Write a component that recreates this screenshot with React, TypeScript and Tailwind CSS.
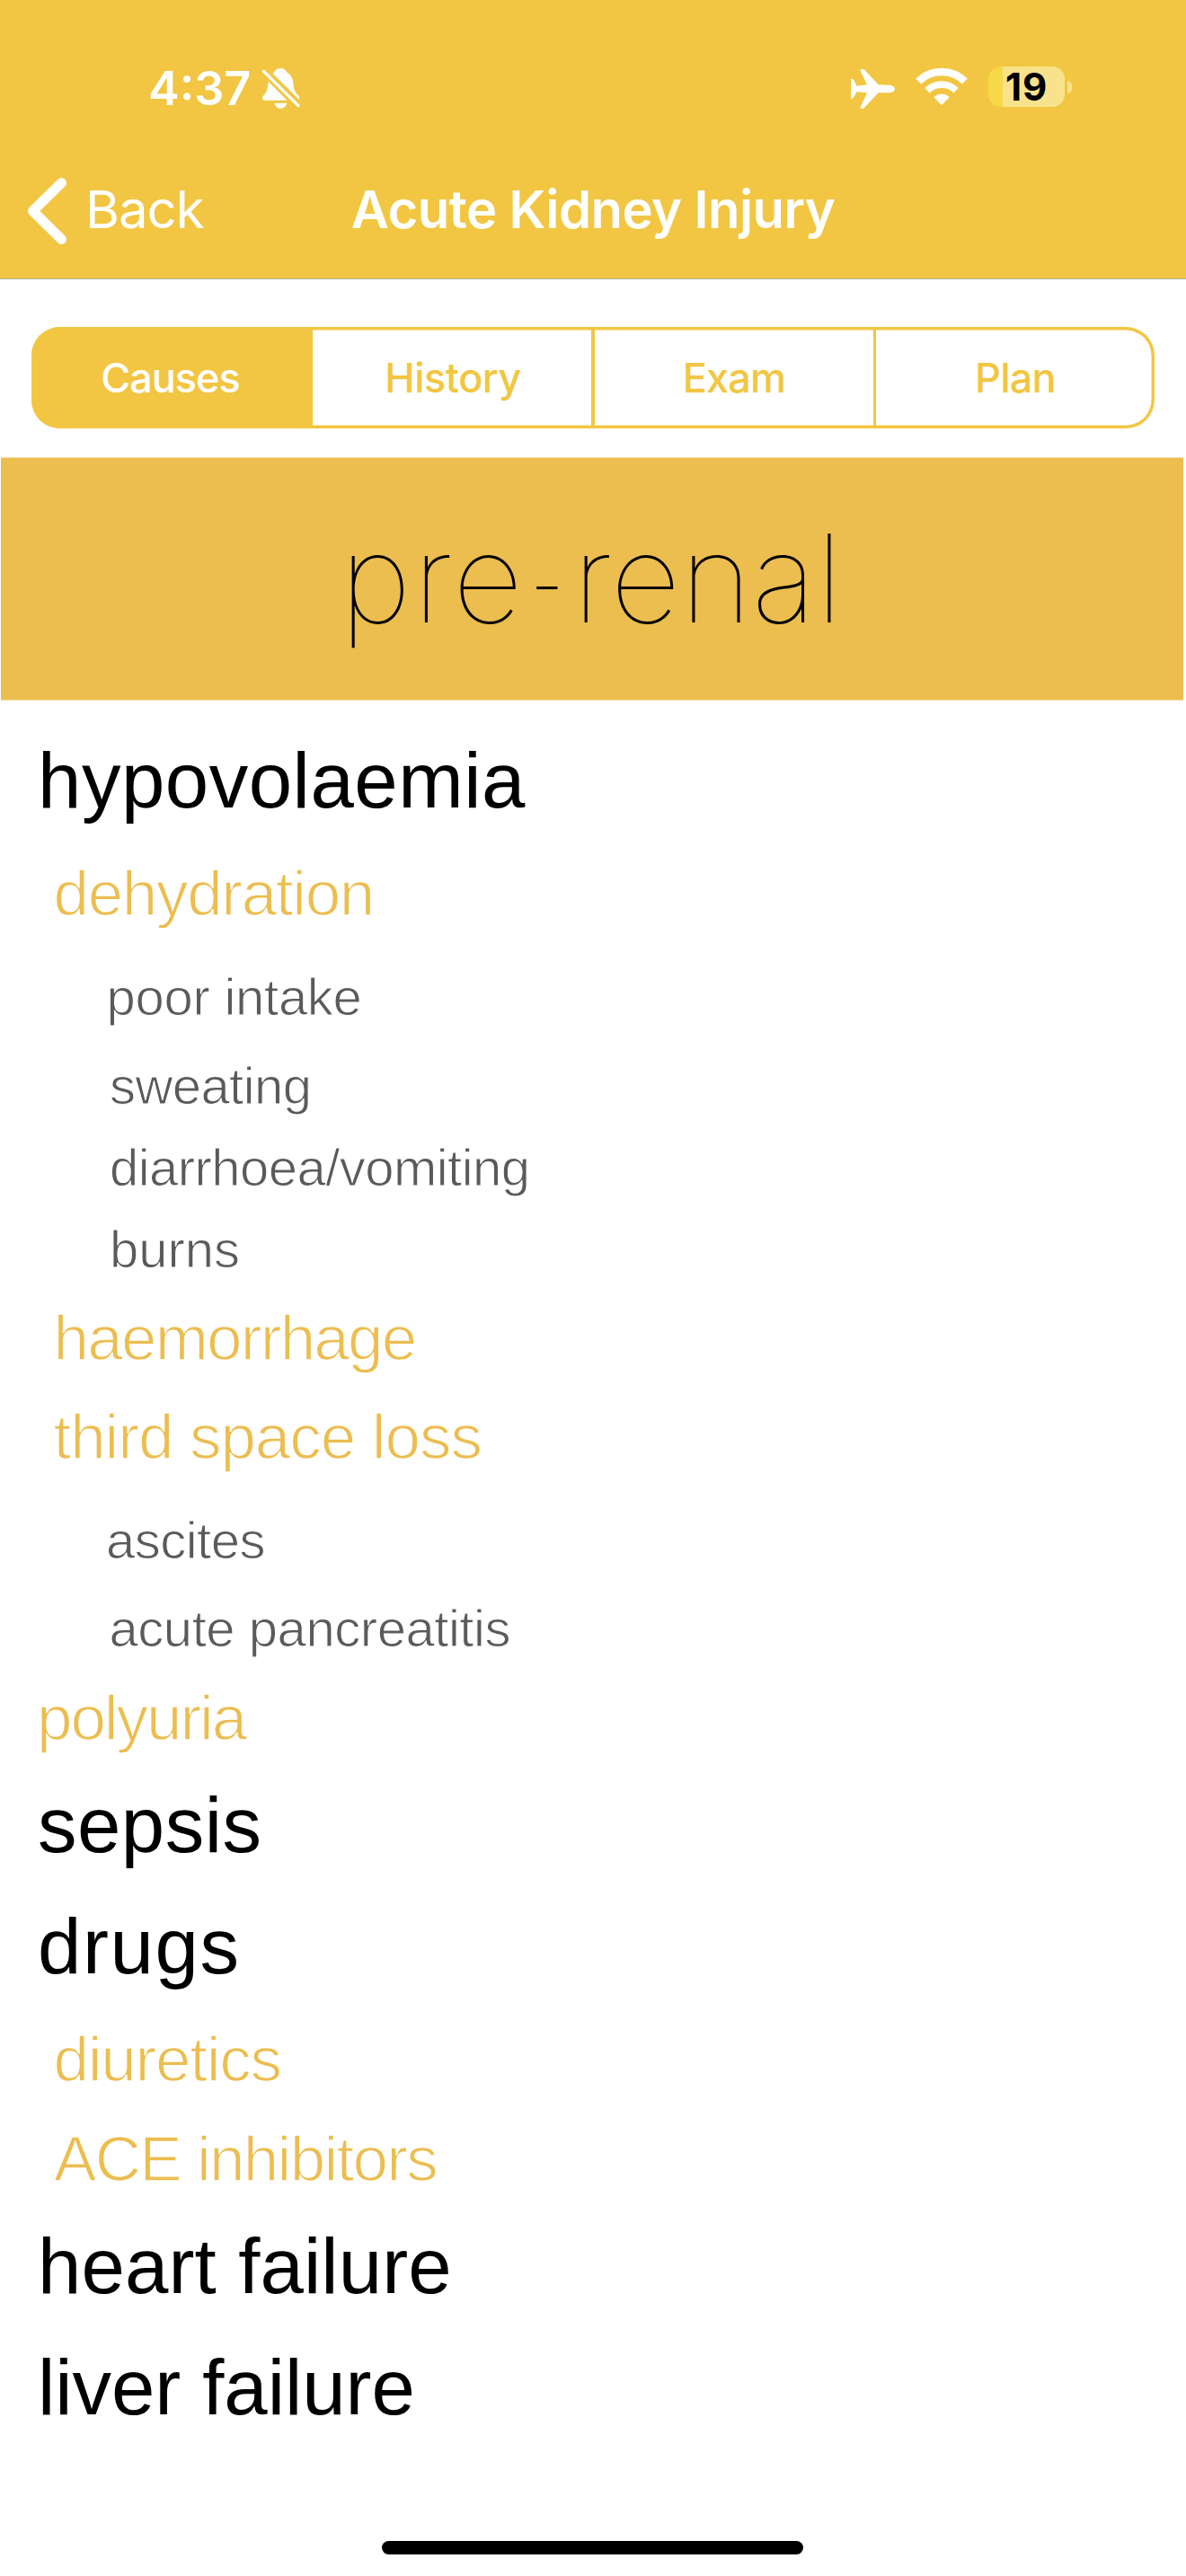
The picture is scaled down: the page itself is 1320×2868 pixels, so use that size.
type Row = { text: string; look: string };

const heading = "text-[87px] leading-[105px] text-black";
const item =
  "text-[71px] leading-[81px] text-[#ecbd4f] [-webkit-text-stroke:1.5px_white]";
const detail =
  "text-[58px] leading-[65px] text-[#5a5a5a] [-webkit-text-stroke:1px_white]";

const rows: Row[] = [
  { text: "hypovolaemia", look: `${heading} pl-[42px] tracking-[0.51px]` },
  { text: "dehydration", look: `${item} mt-[33px] pl-[59.5px] tracking-[-1.32px]` },
  { text: "poor intake", look: `${detail} mt-[42px] pl-[118.5px] tracking-[-0.26px]` },
  { text: "sweating", look: `${detail} mt-[34px] pl-[122px] tracking-[-0.57px]` },
  { text: "diarrhoea/vomiting", look: `${detail} mt-[26px] pl-[122px] tracking-[-0.54px]` },
  { text: "burns", look: `${detail} mt-[26px] pl-[122px]` },
  { text: "haemorrhage", look: `${item} mt-[26px] pl-[59.5px] tracking-[-1.75px]` },
  { text: "third space loss", look: `${item} mt-[29px] pl-[59.5px] tracking-[-1.06px]` },
  { text: "ascites", look: `${detail} mt-[42px] pl-[118px] tracking-[-0.52px]` },
  { text: "acute pancreatitis", look: `${detail} mt-[33px] pl-[121.5px] tracking-[-0.45px]` },
  { text: "polyuria", look: `${item} mt-[27px] pl-[41px] tracking-[-2.05px]` },
  { text: "sepsis", look: `${heading} mt-[26px] pl-[42px] tracking-[0.48px]` },
  { text: "drugs", look: `${heading} mt-[30px] pl-[42px] tracking-[1.57px]` },
  { text: "diuretics", look: `${item} mt-[33px] pl-[59.5px] tracking-[-1.22px]` },
  { text: "ACE inhibitors", look: `${item} mt-[30px] pl-[60px] tracking-[-1.7px]` },
  { text: "heart failure", look: `${heading} mt-[26px] pl-[42px] tracking-[0.11px]` },
  { text: "liver failure", look: `${heading} mt-[30px] pl-[42px] tracking-[-0.07px]` },
];

function BellOff() {
  return (
    <svg viewBox="873 74 132 141" className="h-[47px] w-[44px]" fill="white">
      <path d="M911 95C917 89 921 77 937 77C949 77 955 84 959 92C973 100 979 114 980 133C981 153 989 159 997 169C1000 173 1000 177 998 181Z" />
      <path d="M896 121L959 184H884C875 184 874 174 878 170C888 159 893 152 894 137Z" />
      <path d="M916 193H958C955 205 947 211 937 211S919 205 916 193Z" />
      <path d="M880.5 87L996 202" stroke="white" strokeWidth="10" strokeLinecap="round" />
    </svg>
  );
}

function Plane() {
  return (
    <svg viewBox="141 79 147 132" className="h-[44px] w-[49px]" fill="white">
      <path d="M288 145C288 152 280 158 265 158L233 158L188 206Q186 210 182 210L174 210Q171 209 173 205L195 158L161 155L151 172Q148 177 144 177L141 177V112L145 111Q149 112 151 116L161 135L195 131L173 85Q171 80 175 79L182 79Q186 79 188 83L233 131L265 132C280 132 288 138 288 145Z" />
    </svg>
  );
}

function Wifi() {
  return (
    <svg viewBox="359 75 174 129" className="h-[43px] w-[58px]" fill="none" stroke="white">
      <path d="M368.500 121.500A111 111 0 0 1 523.500 121.500" strokeWidth="25" />
      <path d="M398 152A69 69 0 0 1 494 152" strokeWidth="23" />
      <path
        d="M446 199.500L421.500 174.500A37 37 0 0 1 470.500 174.500Z"
        fill="white"
        strokeWidth="3"
        strokeLinejoin="round"
      />
    </svg>
  );
}

function Battery() {
  return (
    <div className="flex items-center gap-[3px]">
      <div className="flex h-[45px] w-[85px] items-center justify-center rounded-[14px] bg-[linear-gradient(to_right,#f7d848_16px,#f8e28c_16px)] text-[42px] leading-[45px] font-bold tracking-[0.9px] text-black">
        <span className="-mt-px">19</span>
      </div>
      <div className="h-[14px] w-[5px] rounded-r-full bg-[#f8e28c]" />
    </div>
  );
}

export default function App() {
  return (
    <div className="flex h-[2868px] w-[1320px] flex-col overflow-hidden bg-white font-['Inter',sans-serif]">
      <header className="h-[311px] border-b border-[#b5b0a0] bg-[#f2c642] text-white">
        <div className="flex h-[196px] pt-[68px] pr-[127px] pl-[165px]">
          <div className="flex h-[61px] items-center">
            <span className="text-[52px] leading-[61px] font-semibold">4:37</span>
            <span className="ml-[12px]">
              <BellOff />
            </span>
          </div>
          <div className="ml-auto flex h-[57px] items-center">
            <span className="mt-[4px]">
              <Plane />
            </span>
            <span className="ml-[23px]">
              <Wifi />
            </span>
            <span className="ml-[23px]">
              <Battery />
            </span>
          </div>
        </div>
        <div className="grid h-[76px] grid-cols-[1fr_auto_1fr] items-center">
          <div className="flex items-center pl-[30px]">
            <svg viewBox="30 196 46 77" className="h-[77px] w-[46px]" fill="none">
              <path
                d="M68.500 202.500L36.500 234L68.500 265.500"
                stroke="white"
                strokeWidth="11"
                strokeLinecap="round"
                strokeLinejoin="round"
              />
            </svg>
            <span className="mb-[5px] ml-[19px] text-[58px] leading-[74px] font-normal tracking-[-1px]">
              Back
            </span>
          </div>
          <h1 className="mb-[5px] text-[58px] leading-[74px] font-semibold tracking-[-0.6px]">
            Acute Kidney Injury
          </h1>
        </div>
      </header>

      <nav className="mt-[53px] ml-[35px] grid h-[113px] w-[1250px] grid-cols-[313px_314px_313px_310px] overflow-hidden rounded-[32px] text-center text-[45px] leading-[113px] font-medium text-[#f2c642] shadow-[inset_0_0_0_3.5px_#f2c642]">
        <span className="bg-[#f2c642] pr-[4px] tracking-[-1.02px] text-white">Causes</span>
        <span className="border-r-4 border-[#f2c642] pl-[2px] tracking-[-0.49px]">History</span>
        <span className="border-r-[3px] border-[#f2c642] tracking-[-0.78px]">Exam</span>
        <span className="tracking-[-0.72px]">Plan</span>
      </nav>

      <div className="mt-[32px] mr-[3px] ml-px h-[271px] border-y border-[#f6dfa9] bg-[#ecbd4f] pl-[377.5px] text-[136px] leading-[268px] font-thin text-black">
        <span className="tracking-[2.2px]">pre</span>
        <span className="mr-[-1px] ml-[-5px] inline-block origin-center translate-y-[4px] scale-x-[0.63]">
          -
        </span>
        renal
      </div>

      <main className="mt-[36px] flex flex-col font-['Liberation_Sans',Arial,sans-serif] whitespace-nowrap">
        {rows.map((row) => (
          <div key={row.text} className={row.look}>
            {row.text}
          </div>
        ))}
      </main>

      <div className="mt-[119px] ml-[425px] h-[15px] w-[469px] rounded-full bg-black" />
    </div>
  );
}
